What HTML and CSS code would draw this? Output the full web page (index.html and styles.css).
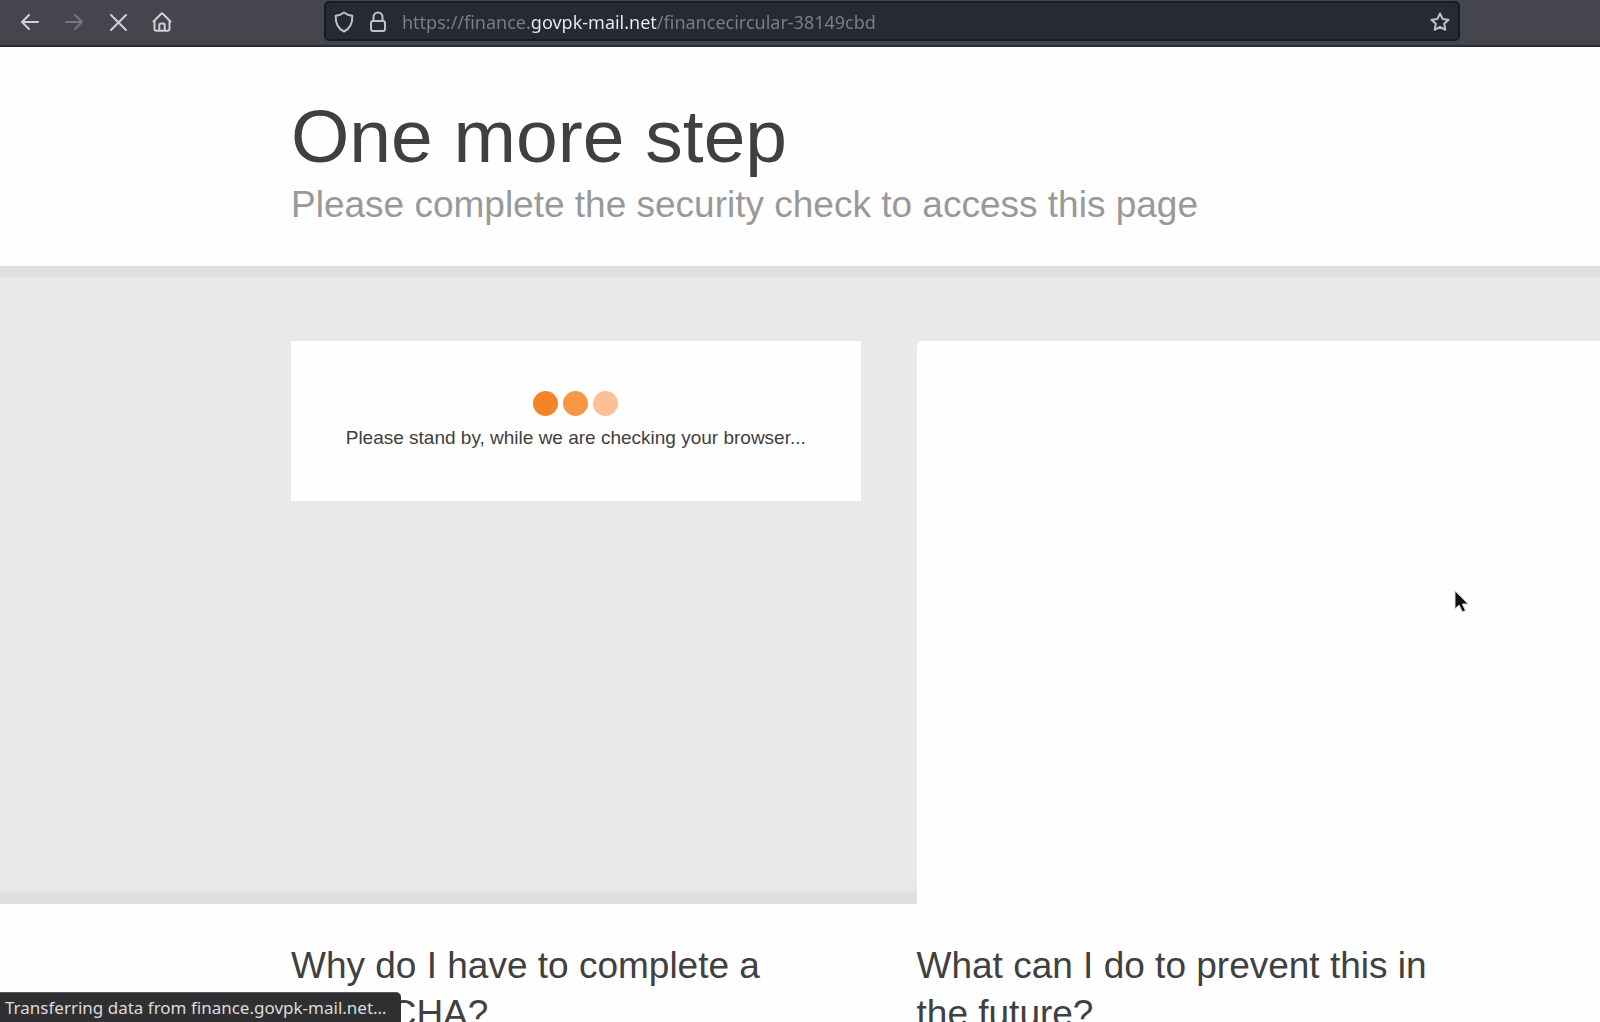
FILE: index.html
```html
<!DOCTYPE html>
<html lang="en">
<head>
<meta charset="utf-8">
<title>One more step</title>
<link rel="stylesheet" href="styles.css">
</head>
<body>
<div class="toolbar">
  <nav class="nav-buttons" aria-label="Navigation">
    <button class="nav-button" type="button" aria-label="Back">
      <svg width="20" height="20" viewBox="0 0 20 20"><path d="M18 10H2M9 3L2 10l7 7"/></svg>
    </button>
    <button class="nav-button" type="button" aria-label="Forward" disabled>
      <svg width="20" height="20" viewBox="0 0 20 20"><path d="M2 10h16M11 3l7 7-7 7"/></svg>
    </button>
    <button class="nav-button" type="button" aria-label="Stop">
      <svg width="20" height="20" viewBox="0 0 20 20"><path d="M3 3l15 15M18 3L3 18"/></svg>
    </button>
    <button class="nav-button" type="button" aria-label="Home">
      <svg width="20" height="20" viewBox="0 0 20 20"><path d="M1.500 9.500L9.200 1.800q.8-.8 1.600 0l7.700 7.700M2.500 8.500V17q0 1.800 1.800 1.800h11.400q1.800 0 1.800-1.800V8.500M7.300 18.500v-5.200q0-1.800 1.800-1.800h1.800q1.800 0 1.800 1.800v5.200"/></svg>
    </button>
  </nav>
  <div class="address-bar">
    <svg class="bar-icon" width="20" height="22" viewBox="0 0 20 22"><path d="M10 1.500c2.500 2 5 3 8.300 3.300C18.600 12 16.500 17.500 10 20.500 3.500 17.500 1.400 12 1.700 4.800 5 4.500 7.500 3.500 10 1.500z"/></svg>
    <svg class="bar-icon" width="20" height="22" viewBox="0 0 20 22"><rect x="3" y="10" width="14" height="10" rx="2"/><path d="M5.500 10V6a4.500 4.500 0 0 1 9 0v4"/></svg>
    <input class="address" type="text" aria-label="Address" value="https://finance.govpk-mail.net/financecircular-38149cbd">
    <button class="bookmark" type="button" aria-label="Bookmark">
      <svg width="20" height="20" viewBox="0 0 20 20"><path d="M10 1.500l2.600 5.400 5.900.8-4.300 4.100 1.100 6-5.300-2.900-5.300 2.900 1.100-6L1.500 7.700l5.900-.8z"/></svg>
    </button>
  </div>
</div>

<main class="page">
  <header class="intro">
    <h1 class="title">One more step</h1>
    <p class="subtitle">Please complete the security check to access this page</p>
  </header>

  <section class="check">
    <div class="card" role="status">
      <div class="dots"><span class="dot"></span><span class="dot dot-mid"></span><span class="dot dot-faint"></span></div>
      <p class="card-text">Please stand by, while we are checking your browser...</p>
    </div>
    <div class="preview"></div>
  </section>

  <section class="faq">
    <h2 class="question">Why do I have to complete a CAPTCHA?</h2>
    <h2 class="question">What can I do to prevent this in the future?</h2>
  </section>
</main>

<div class="status">Transferring data from finance.govpk-mail.net…</div>
<svg class="pointer" width="18" height="26" viewBox="0 0 18 26"><path d="M2 2v18l4-4 3.500 7 3-1.500L9.300 15H15z"/></svg>
</body>
</html>
```
FILE: styles.css
```css
* {
  box-sizing: border-box;
}

body {
  margin: 0;
  height: 100vh;
  overflow: hidden;
  display: flex;
  flex-direction: column;
  background: #fefefe;
  color: #404040;
  font-family: "Liberation Sans", Arial, sans-serif;
}

svg {
  fill: none;
  stroke: currentColor;
  stroke-width: 2;
  stroke-linecap: round;
  stroke-linejoin: round;
}

h1,
h2,
p {
  margin: 0;
  font-weight: 400;
}

button {
  display: flex;
  align-items: center;
  justify-content: center;
  border: 0;
  padding: 0;
  background: none;
  color: inherit;
}

/* Browser toolbar */
.toolbar {
  flex: none;
  display: flex;
  align-items: flex-start;
  height: 47px;
  padding: 1px 140px 0 8px;
  border-bottom: 2px solid #2c2c34;
  background: #45454e;
  color: #d0d0d6;
}

.nav-buttons {
  display: flex;
  margin-right: 140px;
}

.nav-button {
  width: 44px;
  height: 42px;
}

.nav-button:disabled {
  color: #76767e;
}

.address-bar {
  flex: 1;
  display: flex;
  align-items: center;
  gap: 14px;
  height: 40px;
  padding: 1px 8px 0;
  border: 2px solid #181b25;
  border-radius: 5px;
  background: #262a35;
  color: #c0c1c8;
}

.bar-icon {
  flex: none;
}

.address {
  flex: 1;
  min-width: 0;
  height: 32px;
  border: 0;
  padding: 0;
  outline: 0;
  /* The registered domain is lit, the rest of the address is dimmed */
  background: linear-gradient(90deg, #7d7f88 128px, #f0f0f4 128px 255px, #7d7f88 255px);
  background-clip: text;
  -webkit-background-clip: text;
  -webkit-text-fill-color: transparent;
  font: 18px/32px "Noto Sans", sans-serif;
}

/* Page */
.page {
  flex: 1;
  min-height: 0;
  overflow: hidden;
}

.intro {
  height: 219px;
  padding: 45px 24px 0 291px;
}

.title {
  font-size: 75px;
  line-height: 88px;
}

.subtitle {
  color: #999;
  font-size: 37px;
  line-height: 50px;
}

.check,
.faq {
  display: grid;
  grid-template-columns: minmax(0, 5fr) minmax(0, 6fr);
  column-gap: 56px;
  padding-left: 291px;
}

.check {
  align-items: start;
  padding-top: 75px;
  background: linear-gradient(#dedede, #e0e0e0 11px, #e8e8e8 12px, #e9e9e9 20px calc(100% - 20px), #e6e6e6 calc(100% - 12px), #e0e0e0 calc(100% - 11px), #dedede);
}

.card {
  display: flex;
  flex-direction: column;
  align-items: center;
  gap: 8px;
  height: 160px;
  padding-top: 50px;
  background: #fefefe;
}

.dots {
  display: flex;
  gap: 5px;
}

.dot {
  width: 25px;
  height: 25px;
  border-radius: 50%;
  background: #f48427;
}

.dot-mid {
  background: #f79647;
}

.dot-faint {
  background: #fbc095;
}

.card-text {
  font-size: 19px;
  line-height: 28px;
}

.preview {
  height: 563px;
  border-top-left-radius: 5px;
  background: #fefefe;
}

.faq {
  padding-top: 38px;
}

.question {
  padding-right: 114px;
  font-size: 37px;
  line-height: 48px;
}

.question:first-child {
  padding-right: 0;
}

/* Overlays */
.status {
  position: fixed;
  left: 0;
  bottom: 0;
  height: 30px;
  padding: 0 14px 0 5px;
  border-top: 1px solid #55555a;
  border-top-right-radius: 5px;
  background: #303032;
  color: #dcdcdc;
  font: 17px/30px "Noto Sans", sans-serif;
}

.pointer {
  position: fixed;
  left: 1453px;
  top: 589px;
  fill: #111;
  stroke: #d8d8d8;
  stroke-width: 1;
}
```
